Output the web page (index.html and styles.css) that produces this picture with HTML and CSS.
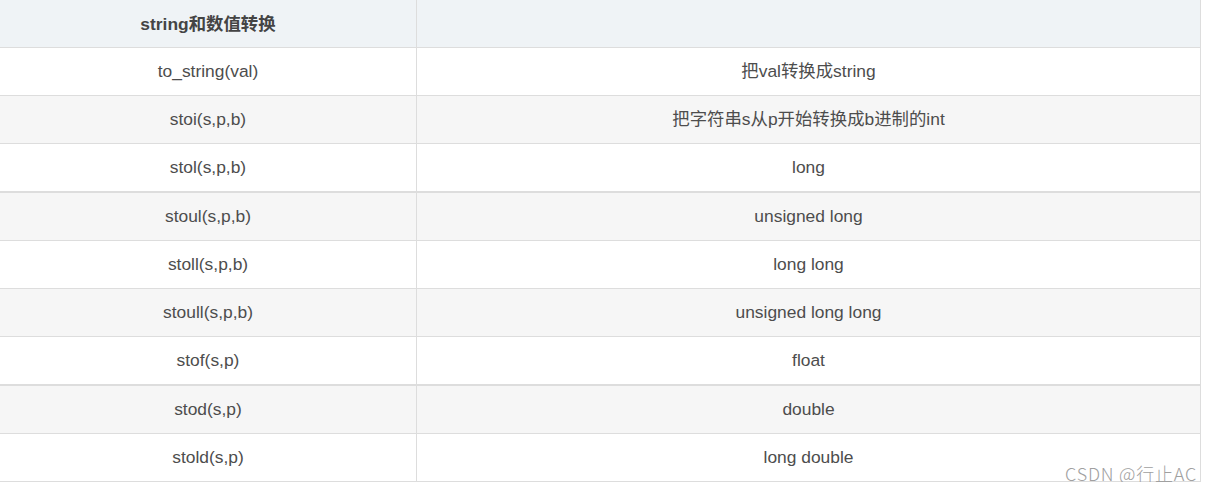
FILE: index.html
```html
<!DOCTYPE html>
<html lang="zh-CN">
<head>
<meta charset="utf-8">
<title>string和数值转换</title>
<link rel="stylesheet" href="styles.css">
</head>
<body>
<div class="wrap">
  <table class="conv">
    <thead>
      <tr><th class="c1">string和数值转换</th><th class="c2"></th></tr>
    </thead>
    <tbody>
      <tr><td>to_string(val)</td><td>把val转换成string</td></tr>
      <tr><td>stoi(s,p,b)</td><td>把字符串s从p开始转换成b进制的int</td></tr>
      <tr class="thick"><td>stol(s,p,b)</td><td>long</td></tr>
      <tr><td>stoul(s,p,b)</td><td>unsigned long</td></tr>
      <tr><td>stoll(s,p,b)</td><td>long long</td></tr>
      <tr><td>stoull(s,p,b)</td><td>unsigned long long</td></tr>
      <tr class="thick"><td>stof(s,p)</td><td>float</td></tr>
      <tr><td>stod(s,p)</td><td>double</td></tr>
      <tr><td>stold(s,p)</td><td>long double</td></tr>
    </tbody>
  </table>
  <div class="watermark">CSDN @行止AC</div>
</div>
</body>
</html>
```

FILE: styles.css
```css
html, body {
  margin: 0;
  padding: 0;
  background: #ffffff;
}

.wrap {
  position: relative;
  width: 1201px;
}

.conv {
  border-collapse: separate;
  border-spacing: 0;
  width: 1201px;
  table-layout: fixed;
  font-family: "Liberation Sans", "Noto Sans CJK SC", sans-serif;
  color: #4d4d4d;
}

.conv th,
.conv td {
  box-sizing: border-box;
  padding: 0;
  text-align: center;
  border-right: 1px solid #dddddd;
  border-bottom: 1px solid #dddddd;
  white-space: nowrap;
}

.conv th:first-child,
.conv td:first-child {
  width: 417px;
}

.conv th:last-child,
.conv td:last-child {
  width: 784px;
}

.conv th {
  background: #eff3f6;
  font-size: 17.4px;
  font-weight: bold;
  color: #444444;
  height: 48px;
  line-height: 46px;
}

.conv td {
  font-size: 17.4px;
  height: 48px;
  line-height: 47px;
}

.conv tbody tr:nth-child(even) td {
  background: #f6f6f6;
}

.conv tr.thick td {
  border-bottom-width: 2px;
  height: 49px;
}

.watermark {
  position: absolute;
  left: 1065px;
  top: 460px;
  font-family: "Noto Sans CJK SC", "DejaVu Sans", sans-serif;
  font-weight: 300;
  font-size: 18px;
  letter-spacing: 0.8px;
  line-height: 26px;
  color: #a0a0a0;
  white-space: nowrap;
}
```
